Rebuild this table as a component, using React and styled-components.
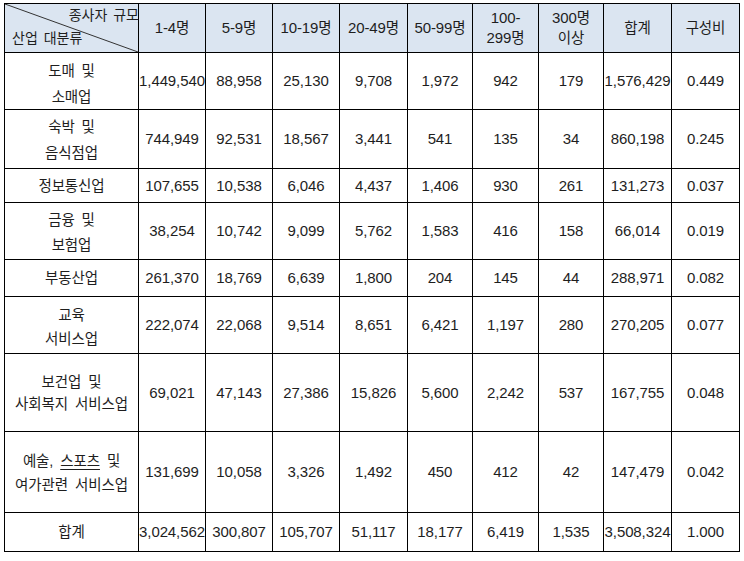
import React from "react";
import styled, { createGlobalStyle } from "styled-components";

const Global = createGlobalStyle`
  html, body { margin: 0; padding: 0; background: #ffffff; }
  body { font-family: "Liberation Sans", "Noto Sans CJK KR", sans-serif; color: #1e1e1e; }
`;

const Page = styled.div`
  padding: 3px 0 0 4px;
`;

const Grid = styled.div`
  display: grid;
  grid-template-columns: 133px 66px 66px 66px 67px 64px 65px 64px 67px 67px;
  grid-template-rows: 48px 56px 58px 33px 56px 36px 56px 77px 80px 38px;
  gap: 1px;
  padding: 1px;
  background: #000;
  width: max-content;
`;

const Cell = styled.div`
  background: ${(p) => (p.$head ? "#dbe5f1" : "#ffffff")};
  display: flex;
  flex-direction: column;
  align-items: center;
  justify-content: center;
  text-align: center;
  font-size: 15px;
  line-height: ${(p) => p.$lh || 20}px;
  white-space: nowrap;
  letter-spacing: -0.1px;
`;

const Label = styled(Cell)`
  font-size: 14.5px;
  word-spacing: 3px;
  line-height: ${(p) => p.$lh || 24}px;
  padding-top: ${(p) => p.$pt || 0}px;
`;

const K = styled.span`
  font-size: 14.5px;
`;

const Corner = styled.div`
  position: relative;
  background: #dbe5f1;
  font-size: 14px;
  word-spacing: 2px;
  display: flex;
  flex-direction: column;
  justify-content: space-between;
  padding: 3px 0 5px 7px;
  box-sizing: border-box;
`;

const CornerTop = styled.span`
  align-self: flex-end;
  margin-right: -1px;
  line-height: 17px;
`;

const CornerBottom = styled.span`
  align-self: flex-start;
  line-height: 17px;
`;

const Diagonal = styled.svg`
  position: absolute;
  inset: 0;
  width: 100%;
  height: 100%;
  pointer-events: none;
`;

const Under = styled.span`
  text-decoration: underline;
  text-underline-offset: 3px;
`;

const heads = [
  [["1-4", "명"]],
  [["5-9", "명"]],
  [["10-19", "명"]],
  [["20-49", "명"]],
  [["50-99", "명"]],
  [["100-", ""], ["299", "명"]],
  [["300", "명"], ["", "이상"]],
  [["", "합계"]],
  [["", "구성비"]],
];

const rows = [
  { label: ["도매 및", "소매업"], lh: 26, pt: 5, v: ["1,449,540", "88,958", "25,130", "9,708", "1,972", "942", "179", "1,576,429", "0.449"] },
  { label: ["숙박 및", "음식점업"], lh: 26, pt: 2, v: ["744,949", "92,531", "18,567", "3,441", "541", "135", "34", "860,198", "0.245"] },
  { label: ["정보통신업"], v: ["107,655", "10,538", "6,046", "4,437", "1,406", "930", "261", "131,273", "0.037"] },
  { label: ["금융 및", "보험업"], lh: 25, pt: 4, v: ["38,254", "10,742", "9,099", "5,762", "1,583", "416", "158", "66,014", "0.019"] },
  { label: ["부동산업"], v: ["261,370", "18,769", "6,639", "1,800", "204", "145", "44", "288,971", "0.082"] },
  { label: ["교육", "서비스업"], lh: 24, pt: 3, v: ["222,074", "22,068", "9,514", "8,651", "6,421", "1,197", "280", "270,205", "0.077"] },
  { label: ["보건업 및", "사회복지 서비스업"], lh: 22, pt: 0, v: ["69,021", "47,143", "27,386", "15,826", "5,600", "2,242", "537", "167,755", "0.048"] },
  { label: ["예술, @스포츠@ 및", "여가관련 서비스업"], lh: 24, pt: 2, v: ["131,699", "10,058", "3,326", "1,492", "450", "412", "42", "147,479", "0.042"] },
  { label: ["합계"], v: ["3,024,562", "300,807", "105,707", "51,117", "18,177", "6,419", "1,535", "3,508,324", "1.000"] },
];

function renderLine(text) {
  if (!text.includes("@")) return text;
  const parts = text.split("@");
  return parts.map((p, i) => (i % 2 === 1 ? <Under key={i}>{p}</Under> : <React.Fragment key={i}>{p}</React.Fragment>));
}

export default function App() {
  return (
    <>
      <Global />
      <Page>
        <Grid>
          <Corner>
            <Diagonal viewBox="0 0 133 48" preserveAspectRatio="none">
              <line x1="0" y1="0" x2="133" y2="48" stroke="#333" strokeWidth="1" />
            </Diagonal>
            <CornerTop>종사자 규모</CornerTop>
            <CornerBottom>산업 대분류</CornerBottom>
          </Corner>
          {heads.map((h, i) => (
            <Cell key={i} $head $lh={20}>
              {h.map(([num, kor], j) => (
                <span key={j}>
                  {num}
                  {kor && <K>{kor}</K>}
                </span>
              ))}
            </Cell>
          ))}
          {rows.map((r, ri) => (
            <React.Fragment key={ri}>
              <Label $lh={r.lh} $pt={r.pt}>
                {r.label.map((l, j) => (
                  <span key={j}>{renderLine(l)}</span>
                ))}
              </Label>
              {r.v.map((v, vi) => (
                <Cell key={vi}>{v}</Cell>
              ))}
            </React.Fragment>
          ))}
        </Grid>
      </Page>
    </>
  );
}
